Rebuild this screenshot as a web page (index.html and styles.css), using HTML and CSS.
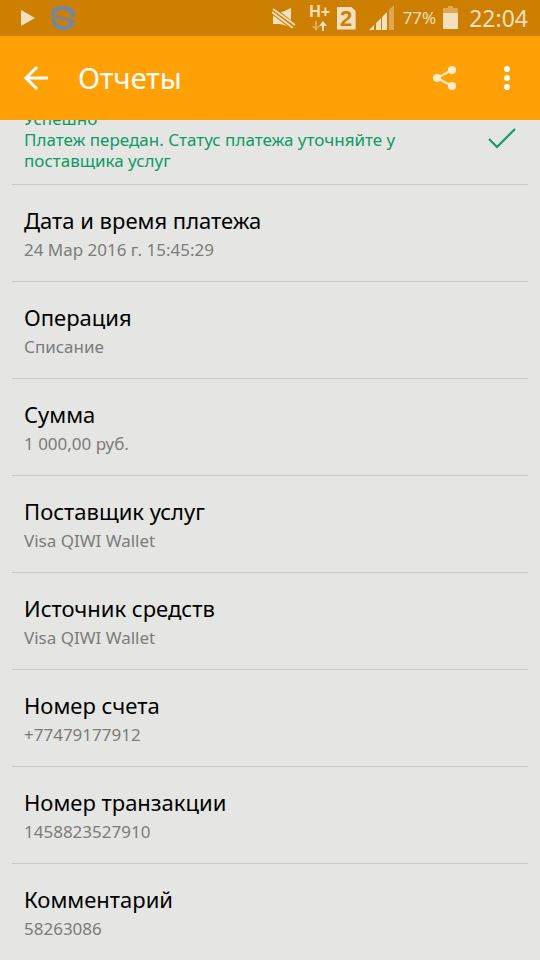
FILE: index.html
```html
<!DOCTYPE html>
<html lang="ru">
<head>
<meta charset="utf-8">
<meta name="viewport" content="width=device-width, initial-scale=1">
<title>Отчеты</title>
<link rel="stylesheet" href="styles.css">
</head>
<body>
<div class="status-bar">
  <div class="status-left">
    <svg width="16" height="18" viewBox="0 0 16 18"><path d="M1 1 15 9 1 17z" fill="#f4dfbf"/></svg>
    <svg width="26" height="26" viewBox="0 0 26 26" fill="#6d87b5"><path d="M25 12H21C20 7 18 5 13 5C8 5 5 7 5 9C7 12 21 12 25 16C24 22 19 25 13 25C6 25 2 20 1 13H5C6 18 9 21 13 21C17 21 20 19 20 17C16 14 5 14 1 10C1 4 6 1 13 1C20 1 25 4 25 12z"/></svg>
  </div>
  <div class="status-right">
    <svg class="mute" width="24" height="20" viewBox="0 0 24 20"><path d="M1 5h7l11-5v19L8 16H1z" fill="#f4dfbf"/><path d="M0 2 22 19" stroke="#cd7f02" stroke-width="7"/><path d="M1 1 23 17M0 4 21 20" stroke="#f4dfbf" stroke-width="1.800"/></svg>
    <div class="network">
      <span>H+</span>
      <svg width="16" height="10" viewBox="0 0 16 10"><path d="M3 0h2v5h3L4 10 0 5h3z" fill="#dfa854"/><path d="M10 10h2V5h3L11 0 7 5h3z" fill="#f4dfbf"/></svg>
    </div>
    <span class="sim">2</span>
    <svg class="signal" width="26" height="26" viewBox="0 0 26 26" fill="#f4dfbf"><path d="M0 25 5 20v5zM7 18l5-5v12H7zM13 12l5-5v18h-5z"/><path d="M20 5l5-5v25h-5z" fill="#dfa854"/></svg>
    <span class="percent">77%</span>
    <svg class="battery" width="16" height="24" viewBox="0 0 16 24"><path d="M0 2h5V0h5v2h5v6H0z" fill="#dfa854"/><path d="M0 7h15v16H0z" fill="#f4dfbf"/></svg>
    <time class="clock">22:04</time>
  </div>
</div>
<header class="app-bar">
  <button class="icon-button" aria-label="Назад"><svg width="26" height="26" viewBox="0 0 26 26" fill="none" stroke="#fff" stroke-width="3"><path d="M25 13H3M14 2 3 13l11 11"/></svg></button>
  <h1>Отчеты</h1>
  <button class="icon-button share" aria-label="Поделиться"><svg width="24" height="26" viewBox="0 0 24 26" fill="#ffecce"><path d="M19 5 4 13 19 21" fill="none" stroke="#ffecce" stroke-width="2"/><circle cx="19" cy="5" r="4"/><circle cx="4" cy="13" r="4"/><circle cx="19" cy="21" r="4"/></svg></button>
  <button class="icon-button more" aria-label="Ещё"><svg width="8" height="26" viewBox="0 0 8 26" fill="#fff"><circle cx="4" cy="4" r="3"/><circle cx="4" cy="13" r="3"/><circle cx="4" cy="22" r="3"/></svg></button>
</header>
<main class="report">
  <section class="result">
    <p>Успешно<br>Платеж передан. Статус платежа уточняйте у поставщика услуг</p>
    <svg width="28" height="22" viewBox="0 0 28 22" fill="none" stroke="#0d9b66" stroke-width="2"><path d="M1 11 9 19 27 1"/></svg>
  </section>
  <dl class="details">
    <div class="row"><dt>Дата и время платежа</dt><dd>24 Мар 2016 г. 15:45:29</dd></div>
    <div class="row"><dt>Операция</dt><dd>Списание</dd></div>
    <div class="row"><dt>Сумма</dt><dd>1 000,00 руб.</dd></div>
    <div class="row"><dt>Поставщик услуг</dt><dd>Visa QIWI Wallet</dd></div>
    <div class="row"><dt>Источник средств</dt><dd>Visa QIWI Wallet</dd></div>
    <div class="row"><dt>Номер счета</dt><dd>+77479177912</dd></div>
    <div class="row"><dt>Номер транзакции</dt><dd>1458823527910</dd></div>
    <div class="row"><dt>Комментарий</dt><dd>58263086</dd></div>
  </dl>
</main>
</body>
</html>
```
FILE: styles.css
```css
* { box-sizing: border-box; }
body {
  margin: 0;
  height: 100vh;
  display: flex;
  flex-direction: column;
  overflow: hidden;
  background: #e5e5e3;
  color: #000;
  font-family: "Noto Sans", "Open Sans", sans-serif;
}
svg { display: block; flex: none; }
.status-bar {
  flex: none;
  display: flex;
  justify-content: space-between;
  align-items: center;
  height: 36px;
  padding: 0 12px 0 20px;
  background: #cd7f02;
  color: #f4dfbf;
}
.status-left, .status-right { display: flex; align-items: center; }
.status-left { gap: 14px; }
.mute { margin-right: 14px; }
.network {
  display: flex;
  flex-direction: column;
  align-items: center;
  gap: 2px;
  width: 20px;
  margin-right: 7px;
  font: bold 16px/14px "Liberation Sans Narrow", "Liberation Sans", sans-serif;
}
.sim {
  width: 19px;
  height: 23px;
  margin-right: 13px;
  background: #f4dfbf;
  clip-path: polygon(0 0, 75% 0, 100% 20%, 100% 100%, 0 100%);
  color: #cd7f02;
  font: bold 22px/24px "Liberation Sans", sans-serif;
  text-align: center;
}
.signal { margin-right: 8px; }
.percent { margin-right: 7px; font-size: 17px; line-height: 24px; }
.battery { margin-right: 10px; }
.clock { font-size: 23px; line-height: 36px; }
.app-bar {
  flex: none;
  display: flex;
  align-items: center;
  height: 84px;
  padding: 0 16px;
  background: #ffa006;
  color: #fff;
}
.app-bar h1 {
  flex: 1;
  margin: 0 0 0 22px;
  font-size: 29px;
  font-weight: 400;
  line-height: 40px;
}
.icon-button {
  display: grid;
  place-items: center;
  width: 40px;
  height: 48px;
  padding: 0;
  border: 0;
  background: none;
}
.share { margin-right: 25px; }
.more { width: 34px; }
.report {
  flex: 1;
  min-height: 0;
  overflow: hidden;
  padding: 0 12px;
}
.result {
  display: flex;
  justify-content: space-between;
  align-items: flex-start;
  margin-top: -12px;
  padding: 0 12px 13px;
  border-bottom: 1px solid #c9c9c7;
  color: #0d9b66;
}
.result p {
  max-width: 400px;
  margin: 0;
  font-size: 17px;
  line-height: 21px;
}
.result svg { margin-top: 20px; }
.details { margin: 0; }
.row {
  padding: 19px 12px;
  border-bottom: 1px solid #c9c9c7;
}
.row:last-child { border-bottom: 0; }
dt { font-size: 22px; line-height: 32px; }
dd {
  margin: 2px 0 0;
  color: #7c7c7b;
  font-size: 17px;
  line-height: 24px;
}
```
